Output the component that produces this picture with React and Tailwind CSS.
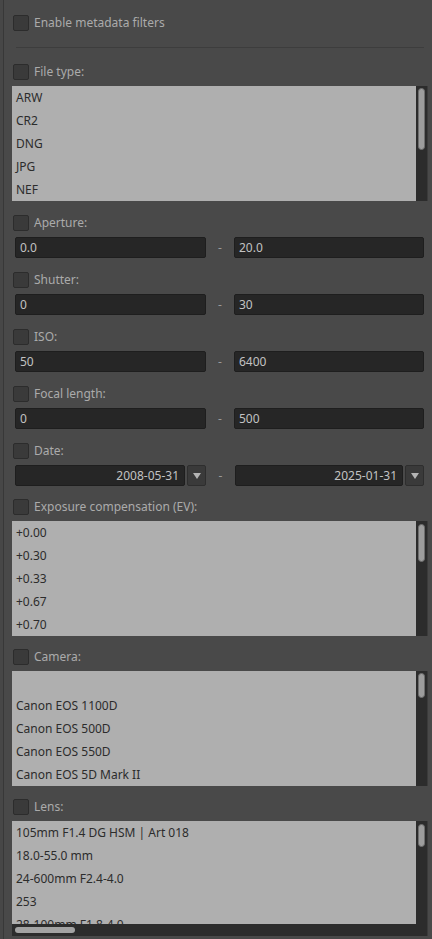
import React from "react";

function Check() {
  return <div className="w-4 h-4 shrink-0 rounded-[2px] bg-[#3a3a3a] border border-[#2c2c2c]" />;
}

function Label({ text, mt }) {
  return (
    <div className={"flex items-center h-4 ml-[1px] gap-[5px] " + mt}>
      <Check />
      <span className="text-[12px] leading-none text-[#ababab]">{text}</span>
    </div>
  );
}

function Thumb({ top, h }) {
  return (
    <div className="flex flex-col items-center">
      <div style={{ height: top }} />
      <div
        style={{ height: h }}
        className="w-[7px] rounded-full bg-[#9d9d9d] border border-[#6e6e6e]"
      />
    </div>
  );
}

function List({ items, thumbTop, thumbH, hscroll }) {
  return (
    <div className="flex h-[115px] mt-[6px]">
      <div className="flex-1 flex flex-col bg-[#2c2c2c] min-w-0">
        <div className="flex-1 bg-[#afafaf] overflow-hidden">
          {items.map((t, i) => (
            <div
              key={i}
              className="h-[23px] flex items-center pl-[4px] text-[12px] text-[#2c2c2c] whitespace-nowrap"
            >
              {t}
            </div>
          ))}
        </div>
        {hscroll && (
          <div className="h-[12px] flex items-center pl-[3px]">
            <div className="w-[60px] h-[6px] rounded-full bg-[#a3a3a3]" />
          </div>
        )}
      </div>
      <div className="w-[11px] bg-[#2c2c2c]">
        <Thumb top={thumbTop} h={thumbH} />
      </div>
      <div className="w-[1px] bg-[#3b3b3b]" />
    </div>
  );
}

function Input({ value }) {
  return (
    <div className="h-[21px] rounded-[2px] bg-[#262626] border border-[#1e1e1e] flex items-center pl-[4px] text-[12px] text-[#c2c2c2]">
      {value}
    </div>
  );
}

function Range({ label, a, b, mt }) {
  return (
    <div>
      <Label text={label} mt={mt} />
      <div className="mt-[6px] ml-[3px] mr-[4px] grid grid-cols-[191px_28px_1fr] items-center">
        <Input value={a} />
        <div className="text-center text-[12px] text-[#9a9a9a]">-</div>
        <Input value={b} />
      </div>
    </div>
  );
}

function DateBox({ value }) {
  return (
    <div className="flex gap-[2px] items-stretch">
      <div className="flex-1 h-[21px] rounded-[2px] bg-[#262626] border border-[#1e1e1e] flex items-center justify-end pr-[5px] text-[12px] text-[#c2c2c2]">
        {value}
      </div>
      <div className="w-[19px] h-[21px] rounded-[2px] bg-[#3a3a3a] border border-[#2e2e2e] flex items-center justify-center">
        <svg width="8" height="6" viewBox="0 0 8 6">
          <path d="M0 0 L8 0 L4 6 Z" fill="#b4b4b4" />
        </svg>
      </div>
    </div>
  );
}

export default function App() {
  return (
    <div className="w-[432px] h-[939px] bg-[#494949] flex overflow-hidden font-['Noto_Sans',sans-serif]">
      <div className="w-[3px] bg-[#474747]" />
      <div className="w-[1px] bg-[#383838]" />
      <div className="flex-1 flex flex-col pl-[8px] pr-[4px]">
        <Label text="Enable metadata filters" mt="mt-[15px]" />
        <div className="mt-[16px] h-px bg-[#3d3d3d] ml-[4px] mr-[4px]" />

        <Label text="File type:" mt="mt-[16px]" />
        <List items={["ARW", "CR2", "DNG", "JPG", "NEF"]} thumbTop={2} thumbH={62} />

        <Range label="Aperture:" a="0.0" b="20.0" mt="mt-[14px]" />
        <Range label="Shutter:" a="0" b="30" mt="mt-[14px]" />
        <Range label="ISO:" a="50" b="6400" mt="mt-[14px]" />
        <Range label="Focal length:" a="0" b="500" mt="mt-[14px]" />

        <div>
          <Label text="Date:" mt="mt-[14px]" />
          <div className="mt-[6px] ml-[3px] mr-[4px] grid grid-cols-[191px_29px_1fr] items-center">
            <DateBox value="2008-05-31" />
            <div className="text-center text-[12px] text-[#9a9a9a]">-</div>
            <DateBox value="2025-01-31" />
          </div>
        </div>

        <Label text="Exposure compensation (EV):" mt="mt-[13px]" />
        <List
          items={["+0.00", "+0.30", "+0.33", "+0.67", "+0.70"]}
          thumbTop={3}
          thumbH={38}
        />

        <Label text="Camera:" mt="mt-[13px]" />
        <List
          items={["", "Canon EOS 1100D", "Canon EOS 500D", "Canon EOS 550D", "Canon EOS 5D Mark II"]}
          thumbTop={2}
          thumbH={25}
        />

        <Label text="Lens:" mt="mt-[13px]" />
        <List
          items={[
            "105mm F1.4 DG HSM | Art 018",
            "18.0-55.0 mm",
            "24-600mm F2.4-4.0",
            "253",
            "28-100mm F1.8-4.0",
          ]}
          thumbTop={3}
          thumbH={23}
          hscroll
        />
      </div>
    </div>
  );
}
